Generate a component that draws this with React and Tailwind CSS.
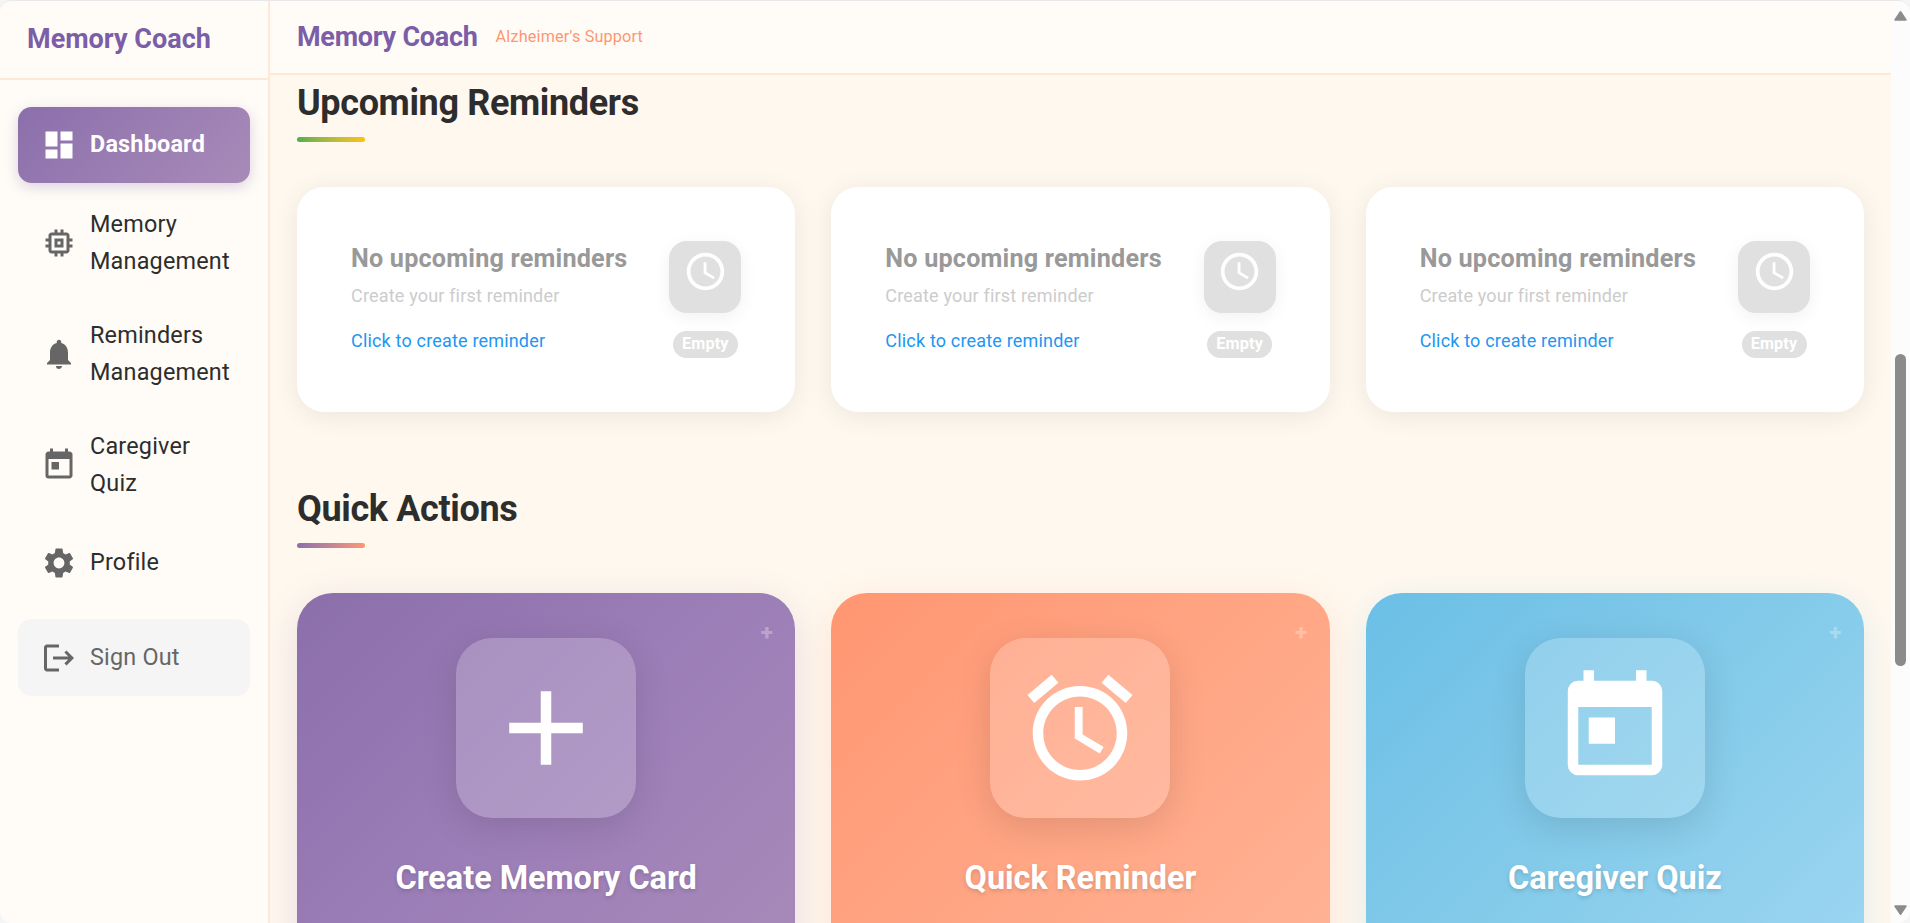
import {
    MdDashboard,
    MdMemory,
    MdNotifications,
    MdToday,
    MdSettings,
    MdLogout,
    MdAccessTime,
    MdAdd,
    MdAlarm,
} from 'react-icons/md';

const navItems = [
    { label: 'Dashboard', icon: MdDashboard, active: true },
    { label: 'Memory Management', icon: MdMemory, tall: true },
    { label: 'Reminders Management', icon: MdNotifications, tall: true },
    { label: 'Caregiver Quiz', icon: MdToday, tall: true },
    { label: 'Profile', icon: MdSettings },
];

const quickActions = [
    {
        title: 'Create Memory Card',
        icon: MdAdd,
        style: 'from-[#8b6fab] via-[#9d7fb8] to-[#a98bb9] shadow-[0_9px_36px_rgba(139,111,171,0.2)]',
    },
    {
        title: 'Quick Reminder',
        icon: MdAlarm,
        style: 'from-[#ff9671] via-[#ffa685] to-[#ffb599] shadow-[0_9px_36px_rgba(255,150,113,0.2)]',
    },
    {
        title: 'Caregiver Quiz',
        icon: MdToday,
        style: 'from-[#6bbfe6] via-[#85cbea] to-[#a0d8f3] shadow-[0_9px_36px_rgba(107,191,230,0.2)]',
    },
];

function NavItem({ item }) {
    const Icon = item.icon;
    return (
        <button
            className={`w-full flex items-center gap-[13.5px] pl-[22.5px] pr-[18px] rounded-[13.5px] text-left
                       ${item.tall ? 'h-[102px]' : 'h-[76px]'}
                       ${item.active
                    ? 'bg-linear-135 from-[#8b6fab] to-[#a98bb9] text-white font-bold shadow-[0_4px_14px_rgba(139,111,171,0.3)]'
                    : 'text-[#2d2d2d]'}`}
        >
            <Icon className={`w-9 h-9 shrink-0 ${item.active ? 'text-white' : 'text-[#666666]'}`} />
            <span className="text-[23.4px] leading-[37.5px] tracking-[0.2px]">{item.label}</span>
        </button>
    );
}

function Sidebar() {
    return (
        <aside className="w-[270px] shrink-0 bg-[#fffcf7] border-r-2 border-[#ffe8d6]">
            <div className="h-[79px] pl-[27px] flex items-center border-b-2 border-[#ffe8d6]">
                <span className="text-[27px] font-bold text-[#7b5ea7]">Memory Coach</span>
            </div>
            <nav className="pt-[27px] px-[18px] flex flex-col gap-[9px]">
                {navItems.map((item) => (
                    <NavItem key={item.label} item={item} />
                ))}
                <button className="mt-[9px] h-[77px] w-full flex items-center gap-[13.5px] pl-[22.5px] rounded-[13.5px] bg-[#f5f5f5] text-[#666666]">
                    <MdLogout className="w-9 h-9 shrink-0" />
                    <span className="text-[23.4px] tracking-[0.2px]">Sign Out</span>
                </button>
            </nav>
        </aside>
    );
}

function SectionTitle({ children, bar }) {
    return (
        <div>
            <h2 className="text-[36px] leading-[54px] font-bold text-[#2d2d2d] tracking-[-0.36px]">{children}</h2>
            <div className={`mt-[7px] h-[5px] w-[67.5px] rounded-sm bg-linear-to-r ${bar}`}></div>
        </div>
    );
}

function ReminderCard() {
    return (
        <div className="h-[225px] bg-white rounded-[27px] p-[54px] flex justify-between shadow-[0_4px_27px_rgba(0,0,0,0.08)]">
            <div>
                <h3 className="text-[25.2px] leading-[35px] font-bold tracking-[0.2px] text-[#999999]">No upcoming reminders</h3>
                <p className="mt-1.5 text-[18px] leading-[27px] tracking-[0.18px] text-[#cccccc]">Create your first reminder</p>
                <p className="mt-[18px] text-[18px] leading-[27px] tracking-[0.18px] text-[#2196f3]">Click to create reminder</p>
            </div>
            <div className="flex flex-col items-center">
                <div className="w-[72px] h-[72px] pt-2 flex justify-center bg-[#e0e0e0] rounded-[18px] shadow-[0_4px_18px_rgba(0,0,0,0.06)]">
                    <MdAccessTime className="w-[45px] h-[45px] text-white" />
                </div>
                <span className="mt-[18px] h-[27px] w-[65px] flex items-center justify-center rounded-full bg-[#e0e0e0] text-white text-[16.2px] font-bold tracking-[0.16px]">
                    Empty
                </span>
            </div>
        </div>
    );
}

function QuickActionCard({ action }) {
    const Icon = action.icon;
    return (
        <div className={`relative h-[440px] pt-[45px] rounded-[36px] flex flex-col items-center bg-linear-135 ${action.style}`}>
            <span className="absolute top-[22px] right-[22.5px] text-[22.5px] leading-[34px] font-extrabold text-white/30">+</span>
            <div className="w-[180px] h-[180px] flex items-center justify-center rounded-[36px] bg-white/20 shadow-[0_9px_36px_rgba(0,0,0,0.12)]">
                <Icon className="w-[126px] h-[126px] text-white" />
            </div>
            <h3 className="mt-9 text-[32.4px] leading-[49px] font-bold text-white [text-shadow:0_2px_4px_rgba(0,0,0,0.15)]">
                {action.title}
            </h3>
        </div>
    );
}

function Scrollbar() {
    return (
        <div className="w-[19px] shrink-0 h-full bg-[#fcfcfc] flex flex-col items-center pt-2.5 pb-2">
            <svg width="13" height="10" viewBox="0 0 13 10" fill="#8b8b8b">
                <path d="M5.7.6a1 1 0 0 1 1.6 0l5.2 7.6c.5.8.2 1.6-.8 1.6H1.3c-1 0-1.3-.8-.8-1.6z" />
            </svg>
            <div className="mt-[333px] h-[312px] w-[11px] rounded-full bg-[#8b8b8b]"></div>
            <svg className="mt-auto" width="13" height="10" viewBox="0 0 13 10" fill="#8b8b8b">
                <path d="M5.7 9.4a1 1 0 0 0 1.6 0l5.2-7.6c.5-.8.2-1.6-.8-1.6H1.3C.3.2 0 1 .5 1.8z" />
            </svg>
        </div>
    );
}

function App() {
    return (
        <div className="h-screen w-full bg-[#f5f5f5] font-['Roboto',sans-serif]">
            <div className="h-full flex overflow-hidden rounded-xl border-t border-[#e8e8e8]">
                <Sidebar />
                <div className="flex-1 min-w-0 flex flex-col">
                    <header className="h-[74px] shrink-0 px-[27px] flex items-center gap-[18px] bg-[#fffcf7] border-b-2 border-[#ffe8d6]">
                        <h1 className="text-[27px] font-bold text-[#7b5ea7] tracking-[-0.27px]">Memory Coach</h1>
                        <span className="text-[16.2px] tracking-[0.18px] text-[#ff9671]">Alzheimer's Support</span>
                    </header>
                    <main className="flex-1 min-h-0 overflow-hidden px-[27px] pt-px bg-[#fff8ee]">
                        <SectionTitle bar="from-[#4caf50] to-[#ffc107]">Upcoming Reminders</SectionTitle>
                        <div className="mt-[45px] grid grid-cols-3 gap-9">
                            <ReminderCard />
                            <ReminderCard />
                            <ReminderCard />
                        </div>
                        <div className="mt-[70px]">
                            <SectionTitle bar="from-[#8b6fab] to-[#ff9671]">Quick Actions</SectionTitle>
                        </div>
                        <div className="mt-[45px] grid grid-cols-3 gap-9">
                            {quickActions.map((action) => (
                                <QuickActionCard key={action.title} action={action} />
                            ))}
                        </div>
                    </main>
                </div>
                <Scrollbar />
            </div>
        </div>
    );
}

export default App;
